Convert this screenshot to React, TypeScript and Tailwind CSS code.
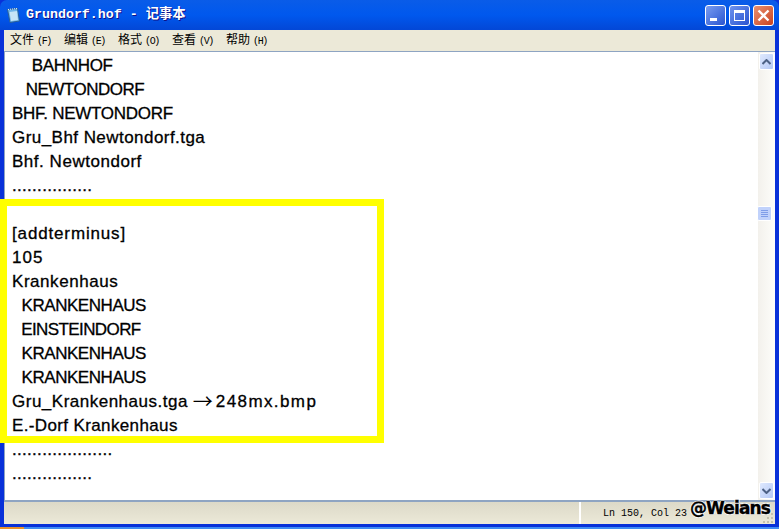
import type { ReactNode } from 'react'

const lines: { text: ReactNode; cls: string }[] = [
  { text: '    BAHNHOF', cls: 'pl-[2px] tracking-[-0.3px]' },
  { text: '   NEWTONDORF', cls: 'pl-px tracking-[-0.5px]' },
  { text: 'BHF. NEWTONDORF', cls: 'tracking-[-0.27px]' },
  { text: 'Gru_Bhf Newtondorf.tga', cls: 'tracking-[0.45px]' },
  { text: 'Bhf. Newtondorf', cls: 'tracking-[0.53px]' },
  { text: '................', cls: 'tracking-[0.3px]' },
  { text: '', cls: '' },
  { text: '[addterminus]', cls: 'tracking-[0.85px]' },
  { text: '105', cls: 'tracking-[1.1px]' },
  { text: 'Krankenhaus', cls: 'tracking-[0.55px]' },
  { text: '  KRANKENHAUS', cls: 'pl-px tracking-[-0.45px]' },
  { text: '  EINSTEINDORF', cls: 'pl-px tracking-[-0.6px]' },
  { text: '  KRANKENHAUS', cls: 'pl-px tracking-[-0.45px]' },
  { text: '  KRANKENHAUS', cls: 'pl-px tracking-[-0.45px]' },
  {
    text: (
      <>
        <span className="tracking-[0.5px]">Gru_Krankenhaus.tga</span>
        <span className="ml-[5px] align-[-2px] font-['Noto_Sans_CJK_SC',sans-serif] text-[20px] leading-[0] [-webkit-text-stroke:0]">→</span>
        <span className="ml-[3px] tracking-[1.4px]">248mx.bmp</span>
      </>
    ),
    cls: '',
  },
  { text: 'E.-Dorf Krankenhaus', cls: 'tracking-[0.37px]' },
  { text: '....................', cls: 'tracking-[0.3px]' },
  { text: '................', cls: 'tracking-[0.3px]' },
]

const menus = [
  ['文件', 'F'],
  ['编辑', 'E'],
  ['格式', 'O'],
  ['查看', 'V'],
  ['帮助', 'H'],
]

function NotepadIcon() {
  return (
    <svg width="16" height="17" viewBox="0 0 16 17" className="shrink-0">
      <path d="M1.5 2.5 L11.5 1.5 L13.5 14 L4 15.5 Z" fill="#6fb5e8" stroke="#2a5f98" />
      <path d="M3.5 5 L11 4 L12 13 L5 14 Z" fill="#c6e4f6" />
      <path d="M2 2.5 L11 1.5" stroke="#e8f4fc" strokeDasharray="1 1" />
    </svg>
  )
}

function ScrollArrow({ up }: { up?: boolean }) {
  return (
    <div className="flex h-[17px] w-[15px] items-center justify-center rounded-[2px] border border-white bg-gradient-to-br from-[#dfe9fe] to-[#b4c8f5]">
      <svg width="9" height="6" viewBox="0 0 9 6">
        <path d={up ? 'M0.5 5 L4.5 1 L8.5 5' : 'M0.5 1 L4.5 5 L8.5 1'} fill="none" stroke="#4d6185" strokeWidth="2" />
      </svg>
    </div>
  )
}

export default function App() {
  return (
    <div className="relative flex h-[529px] w-[779px] flex-col overflow-hidden bg-[#0831d9] font-['Liberation_Sans','Noto_Sans_CJK_SC',sans-serif]">
      <div className="flex h-[30px] shrink-0 items-center rounded-t-[7px] bg-gradient-to-b from-[#0a5ce8] via-[#0058ee] to-[#0347d6] pl-[6px] pr-[5px]">
        <NotepadIcon />
        <span className="ml-[4px] font-['Liberation_Mono','Noto_Sans_CJK_SC',monospace] text-[13.3px] font-bold text-white [text-shadow:1px_1px_#0f1089]">
          Grundorf.hof - 记事本
        </span>
        <div className="ml-auto flex gap-[3px]">
          <div className="flex h-[21px] w-[21px] items-end rounded-[3px] border border-white bg-gradient-to-br from-[#7a9cf0] to-[#2a53d0] pb-[4px] pl-[4px]">
            <div className="h-[3px] w-[7px] bg-white" />
          </div>
          <div className="flex h-[21px] w-[21px] items-center justify-center rounded-[3px] border border-white bg-gradient-to-br from-[#6f93ee] to-[#2a53d0]">
            <div className="h-[11px] w-[11px] border border-t-[3px] border-white" />
          </div>
          <div className="flex h-[21px] w-[21px] items-center justify-center rounded-[3px] border border-white bg-gradient-to-br from-[#e8906f] to-[#c8401c]">
            <svg width="13" height="13" viewBox="0 0 13 13">
              <path d="M1.5 1.5 L11.5 11.5 M11.5 1.5 L1.5 11.5" stroke="#fff" strokeWidth="2.4" />
            </svg>
          </div>
        </div>
      </div>

      <div className="flex min-h-0 flex-1 flex-col px-[4px]">
        <div className="flex h-[21px] shrink-0 items-center bg-[#ece9d8] pb-px pl-[6px] text-[12px] text-black">
          {menus.map(([name, key]) => (
            <span key={key} className="w-[54px] whitespace-pre">
              {name}
              <span className="ml-[3px] font-['Liberation_Mono',monospace] text-[10px] tracking-[-1.4px]">({key})</span>
            </span>
          ))}
        </div>

        <div className="flex min-h-0 flex-1 border-b-2 border-l border-t border-[#8ea4c2] bg-white">
          <div className="flex-1 pl-[7px] pt-[2px] text-[17px] leading-[24px] text-black [-webkit-text-stroke:0.3px_black]">
            {lines.map((line, i) => (
              <div key={i} className={`h-[24px] whitespace-pre ${line.cls}`}>
                {line.text}
              </div>
            ))}
          </div>
          <div className="flex w-[17px] shrink-0 flex-col items-center justify-between bg-gradient-to-r from-[#f3f1ec] to-[#fdfdfa] py-px">
            <ScrollArrow up />
            <ScrollArrow />
          </div>
        </div>

        <div className="flex h-[22px] shrink-0 items-center bg-gradient-to-b from-[#dcd9c8] to-[#ece9d8]">
          <div className="ml-auto flex h-full items-center border-l-2 border-white pl-[22px] pr-[88px] font-['Liberation_Mono',monospace] text-[10px] text-black">
            Ln 150, Col 23
          </div>
        </div>
      </div>
      <div className="h-[3px] shrink-0 bg-[#0831d9]" />
      <div className="flex h-[2px] shrink-0 bg-[#3f8cf3]">
        <div className="w-[24px] bg-[#e8912c]" />
      </div>

      {/* scrollbar thumb */}
      <div className="absolute left-[757px] top-[206px] flex h-[15px] w-[15px] flex-col items-center justify-center gap-px rounded-[2px] border border-white bg-[#c1d2fb]">
        <div className="h-px w-[7px] bg-[#7f9de8]" />
        <div className="h-px w-[7px] bg-[#7f9de8]" />
        <div className="h-px w-[7px] bg-[#7f9de8]" />
        <div className="h-px w-[7px] bg-[#7f9de8]" />
      </div>

      {/* size grip */}
      <svg width="12" height="11" viewBox="0 0 12 11" className="absolute left-[763px] top-[513px]" fill="#c4c1ae">
        <rect x="8" y="0" width="2" height="2" />
        <rect x="4" y="4" width="2" height="2" />
        <rect x="8" y="4" width="2" height="2" />
        <rect x="0" y="8" width="2" height="2" />
        <rect x="4" y="8" width="2" height="2" />
        <rect x="8" y="8" width="2" height="2" />
      </svg>

      {/* highlight box */}
      <div className="absolute left-0 top-[199px] h-[244px] w-[384px] border-[7px] border-[#ffff00]" />

      {/* watermark */}
      <div className="absolute left-[690px] top-[498px] font-['DejaVu_Sans',sans-serif] text-[17px] font-bold leading-[20px] tracking-[-0.9px] text-black [-webkit-text-stroke:0.4px_black] [text-shadow:1px_0_#fff,-1px_0_#fff,0_1px_#fff,0_-1px_#fff]">
        @Weians
      </div>
    </div>
  )
}
